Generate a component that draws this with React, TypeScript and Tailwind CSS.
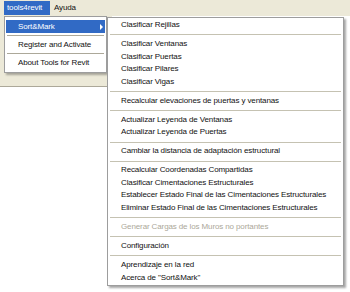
const leftItems = ['Register and Activate', 'About Tools for Revit'];

type Entry = { label?: string; disabled?: boolean; sep?: boolean };

const subItems: Entry[] = [
  { label: 'Clasificar Rejillas' },
  { sep: true },
  { label: 'Clasificar Ventanas' },
  { label: 'Clasificar Puertas' },
  { label: 'Clasificar Pilares' },
  { label: 'Clasificar Vigas' },
  { sep: true },
  { label: 'Recalcular elevaciones de puertas y ventanas' },
  { sep: true },
  { label: 'Actualizar Leyenda de Ventanas' },
  { label: 'Actualizar Leyenda de Puertas' },
  { sep: true },
  { label: 'Cambiar la distancia de adaptación estructural' },
  { sep: true },
  { label: 'Recalcular Coordenadas Compartidas' },
  { label: 'Clasificar Cimentaciones Estructurales' },
  { label: 'Establecer Estado Final de las Cimentaciones Estructurales' },
  { label: 'Eliminar Estado Final de las Cimentaciones Estructurales' },
  { sep: true },
  { label: 'Generar Cargas de los Muros no portantes', disabled: true },
  { sep: true },
  { label: 'Configuración' },
  { sep: true },
  { label: 'Aprendizaje en la red' },
  { label: 'Acerca de "Sort&Mark"' },
];

const App = () => {
  return (
    <div
      className="relative w-[350px] h-[292px] overflow-hidden bg-white text-[8px] tracking-[-0.12px] text-[#111] antialiased"
      style={{ fontFamily: '"Liberation Sans", Arial, sans-serif' }}
    >
      {/* menu bar */}
      <div className="flex h-[16px] items-center bg-[#ece9d8] pl-[4px]">
        <div className="flex h-[14px] w-[46px] items-center bg-[#316ac5] pl-[3px] text-white">tools4revit</div>
        <div className="pl-[4px]">Ayuda</div>
      </div>
      {/* toolbar strip behind the menus */}
      <div className="h-[71px] w-[112px] border-b border-[#aca899] bg-[#ece9d8]" />

      {/* tools4revit dropdown */}
      <div className="absolute left-[4px] top-[16px] w-[103px] border border-[#9d9d9d] bg-white px-[1px] py-[3px] shadow-[2px_2px_2px_rgba(0,0,0,0.3)]">
        <div className="relative flex h-[13px] items-center bg-[#316ac5] pl-[12px] text-white">
          Sort&amp;Mark
          <span className="absolute right-[2px] top-[4px] h-0 w-0 border-y-[3px] border-l-[3px] border-y-transparent border-l-white" />
        </div>
        {leftItems.map((label) => (
          <div key={label}>
            <div className="flex h-[5px] items-center px-[1px]">
              <div className="h-px w-full bg-[#aca899]" />
            </div>
            <div className="flex h-[13px] items-center pl-[12px]">{label}</div>
          </div>
        ))}
      </div>

      {/* Sort&Mark submenu */}
      <div className="absolute left-[107px] top-[17px] w-[237px] border border-[#9d9d9d] bg-white py-[1px] shadow-[2px_2px_2px_rgba(0,0,0,0.35)]">
        {subItems.map((it, i) =>
          it.sep ? (
            <div key={i} className="flex h-[6.4px] items-center px-[2px]">
              <div className="h-px w-full bg-[#c5c2b2]" />
            </div>
          ) : (
            <div
              key={i}
              className={`h-[12.6px] whitespace-nowrap pl-[13px] leading-[12.6px] ${it.disabled ? 'text-[#aca899]' : ''}`}
            >
              {it.label}
            </div>
          ),
        )}
      </div>
    </div>
  );
};

export default App;
